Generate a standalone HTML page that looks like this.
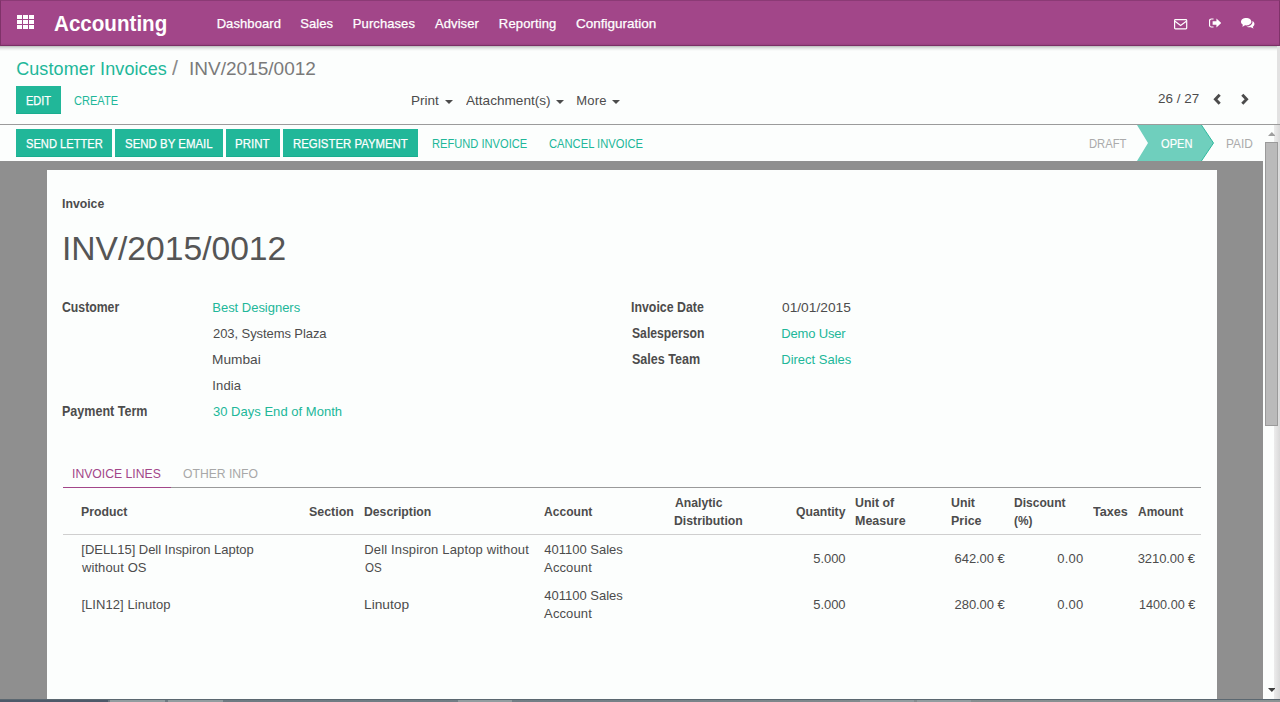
<!DOCTYPE html>
<html lang="en">
<head>
<meta charset="utf-8">
<title>INV/2015/0012 - Odoo</title>
<style>
html,body{margin:0;padding:0}
body{width:1280px;height:702px;position:relative;overflow:hidden;background:#fcfefd;font-family:"Liberation Sans",sans-serif;font-size:13px;color:#4c4c4c}
div,span,svg,i{position:absolute;box-sizing:border-box}
a,label,h1{position:absolute;margin:0;padding:0;font-weight:400;font-size:13px;text-decoration:none}
.t{white-space:nowrap;line-height:1;transform-origin:0 0}
.cw{color:#fff}.ct{color:#21b799}.cd{color:#4c4c4c}.cp{color:#a24689}
.b{font-weight:700}
#nav{left:0;top:0;width:1280px;height:46px;background:linear-gradient(#a24689 0,#a24689 42px,#97407f 44px,#7b2f66 44px);border:1px solid #7f3269;border-top-color:#8b3a75;border-bottom:1px solid #7b2f66}
#navshadow{left:0;top:46px;width:1280px;height:5px;background:linear-gradient(#c3c6c4 0,#c3c6c4 1px,#d8dad9 1px,#d8dad9 2px,#e6e8e7 2px,#e6e8e7 3px,#f0f2f1 3px,#f0f2f1 4px,#f8faf9 4px)}
#cpline{left:0;top:124px;width:1280px;height:1px;background:#9b9b9b}
#edge{left:1277px;top:46px;width:3px;height:78px;background:#e2e2e2}
.btn{background:#21b799;height:28px;border-bottom:1px solid #1aad8f}
#bg{left:0;top:161px;width:1263px;height:538px;background:#8f8f8f}
#sheet{left:47px;top:170px;width:1170px;height:529px;background:#fcfefd}
#sb{left:1263px;top:125px;width:17px;height:574px;background:#fcfefd}
#sbs{left:11px;top:0;width:6px;height:574px;background:linear-gradient(90deg,#ececec,#d9d9d9)}
#thumb{left:2px;top:17px;width:13px;height:284px;background:#bababa;border:1px solid #9a9a9a}
#task{left:0;top:699px;width:1280px;height:3px;background:linear-gradient(90deg,#6b7880 0,#737f86 45%,#868e90 75%,#8b9394 100%);border-top:1px solid #5b6770}
.tb{top:0;height:3px;background:#929da0}
.cr{fill:#4c4c4c}
</style>
</head>
<body>
<nav>
<div id="nav"></div>
<svg style="left:17px;top:15px" width="17" height="14" viewBox="0 0 17 14"><g fill="#fff"><rect x="0" y="0" width="5" height="4"/><rect x="6" y="0" width="5" height="4"/><rect x="12" y="0" width="5" height="4"/><rect x="0" y="5" width="5" height="4"/><rect x="6" y="5" width="5" height="4"/><rect x="12" y="5" width="5" height="4"/><rect x="0" y="10" width="5" height="4"/><rect x="6" y="10" width="5" height="4"/><rect x="12" y="10" width="5" height="4"/></g></svg>
<!-- envelope -->
<svg style="left:1174px;top:18.500px" width="14" height="11" viewBox="0 0 14 11"><rect x="0.6" y="0.6" width="12.100" height="9.200" rx="0.8" fill="none" stroke="#fff" stroke-width="1.2"/><path d="M1 2.200 L6.650 6.400 L12.300 2.200" fill="none" stroke="#fff" stroke-width="1.2"/></svg>
<!-- sign-out -->
<svg style="left:1208.750px;top:18.250px" width="12.700" height="9.980" viewBox="0 0 14 11"><path d="M5 1.100H2.600A2 2 0 0 0 .6 3.100V7.900A2 2 0 0 0 2.600 9.900H5" fill="none" stroke="#fff" stroke-width="1.300"/><path d="M4 3.500H8.200V.5L13.600 5.500 8.200 10.500V7.500H4Z" fill="#fff"/></svg>
<!-- comments -->
<svg style="left:1240.800px;top:18.100px" width="14.200" height="11.360" viewBox="0 0 15 12"><path d="M5.5 0C8.5 0 11 1.7 11 3.9S8.5 7.8 5.5 7.8c-.5 0-.9 0-1.300-.1C3.300 8.500 2.200 9 1 9.100c.5-.5.9-1.100 1.100-1.900C.8 6.500 0 5.300 0 3.900 0 1.700 2.500 0 5.500 0Z" fill="#fff"/><path d="M12 3.200c1.300.7 2.200 1.800 2.200 3.100 0 1.200-.7 2.200-1.800 2.900.2.700.6 1.300 1.100 1.800-1.100-.1-2.200-.6-3-1.300-.4.100-.9.100-1.300.100-1.300 0-2.500-.3-3.400-.9 3.500-.1 6.300-2.100 6.300-4.800 0-.3 0-.6-.1-.9Z" fill="#fff"/></svg>
<a class="t cw b" style="left:54.3px;top:13.8px;transform:scaleX(0.9581);font-size:21.5px">Accounting</a>
<a class="t cw" style="left:216.63px;top:17.1px;letter-spacing:0.1px;-webkit-text-stroke:0.25px currentColor">Dashboard</a>
<a class="t cw" style="left:300.16px;top:17.1px;letter-spacing:0.08px;-webkit-text-stroke:0.25px currentColor">Sales</a>
<a class="t cw" style="left:352.84px;top:17.1px;letter-spacing:0.08px;-webkit-text-stroke:0.25px currentColor">Purchases</a>
<a class="t cw" style="left:435.03px;top:17.1px;letter-spacing:0.08px;-webkit-text-stroke:0.25px currentColor">Adviser</a>
<a class="t cw" style="left:498.86px;top:17.1px;letter-spacing:0.14px;-webkit-text-stroke:0.25px currentColor">Reporting</a>
<a class="t cw" style="left:575.88px;top:17.1px;transform:scaleX(1.0376);-webkit-text-stroke:0.25px currentColor">Configuration</a>
</nav>
<div id="navshadow"></div>
<header>
<div id="cpline"></div>
<div id="edge"></div>
<div class="btn" style="left:16px;top:86px;width:45px"></div>
<svg class="cr" style="left:444.500px;top:100px" width="8" height="4" viewBox="0 0 8 4"><path d="M0 0H8L4 4Z"/></svg>
<svg class="cr" style="left:555.500px;top:100px" width="8" height="4" viewBox="0 0 8 4"><path d="M0 0H8L4 4Z"/></svg>
<svg class="cr" style="left:612.300px;top:100px" width="8" height="4" viewBox="0 0 8 4"><path d="M0 0H8L4 4Z"/></svg>
<svg style="left:1213px;top:93px" width="9" height="13" viewBox="0 0 9 13"><path d="M6.700 1.800 2.400 6.300 6.700 10.800" fill="none" stroke="#4c4c4c" stroke-width="2.900"/></svg>
<svg style="left:1240px;top:93px" width="9" height="13" viewBox="0 0 9 13"><path d="M2.300 1.800 6.600 6.300 2.300 10.800" fill="none" stroke="#4c4c4c" stroke-width="2.900"/></svg>
<a class="t ct" style="left:16.17px;top:59.76px;letter-spacing:0.1px;font-size:18px">Customer Invoices</a>
<span class="t" style="left:172.3px;top:59.29px;transform:scaleX(1.1000);font-size:19.5px;color:#8a8a8a">/</span>
<span class="t" style="left:188.82px;top:59.76px;transform:scaleX(1.0571);font-size:18px;color:#7a7a7a">INV/2015/0012</span>
<span class="t cw" style="left:26.03px;top:93.9px;transform:scaleX(0.8469);-webkit-text-stroke:0.25px currentColor">EDIT</span>
<a class="t ct" style="left:74.49px;top:93.9px;transform:scaleX(0.8500)">CREATE</a>
<span class="t cd" style="left:411.14px;top:93.75px;transform:scaleX(1.0399)">Print</span>
<span class="t cd" style="left:466.37px;top:93.75px;transform:scaleX(1.0455)">Attachment(s)</span>
<span class="t cd" style="left:576.19px;top:93.75px;letter-spacing:0.23px">More</span>
<span class="t cd" style="left:1158.19px;top:91.75px;transform:scaleX(1.0339)">26 / 27</span>
</header>
<section>
<div class="btn" style="left:16px;top:129px;width:96px"></div>
<div class="btn" style="left:115px;top:129px;width:108px"></div>
<div class="btn" style="left:226px;top:129px;width:54px"></div>
<div class="btn" style="left:283px;top:129px;width:135px"></div>
<svg style="left:1136px;top:125px" width="80" height="36" viewBox="0 0 80 36"><path d="M1 0H65.400L77.500 18 65.400 36H1L12 18Z" fill="#6fcfbd"/><path d="M65.400 0 77.500 18 65.400 36" fill="none" stroke="#2fba9f" stroke-width="1"/></svg>
<span class="t cw" style="left:26.28px;top:136.8px;transform:scaleX(0.8562);-webkit-text-stroke:0.25px currentColor">SEND LETTER</span>
<span class="t cw" style="left:125.32px;top:136.8px;transform:scaleX(0.8809);-webkit-text-stroke:0.25px currentColor">SEND BY EMAIL</span>
<span class="t cw" style="left:235.49px;top:136.8px;transform:scaleX(0.8849);-webkit-text-stroke:0.25px currentColor">PRINT</span>
<span class="t cw" style="left:293px;top:136.8px;transform:scaleX(0.8761);-webkit-text-stroke:0.25px currentColor">REGISTER PAYMENT</span>
<a class="t ct" style="left:431.52px;top:136.8px;transform:scaleX(0.8565)">REFUND INVOICE</a>
<a class="t ct" style="left:549.49px;top:136.8px;transform:scaleX(0.8606)">CANCEL INVOICE</a>
<span class="t" style="left:1089.01px;top:136.7px;transform:scaleX(0.8654);color:#ababab">DRAFT</span>
<span class="t cw" style="left:1161.09px;top:136.7px;transform:scaleX(0.8538);-webkit-text-stroke:0.2px currentColor">OPEN</span>
<span class="t" style="left:1225.96px;top:136.7px;transform:scaleX(0.9141);color:#ababab">PAID</span>
</section>
<main>
<div id="bg"></div>
<div id="sheet"></div>
<div style="left:63px;top:487px;width:1138px;height:1px;background:#9a9a9a"></div>
<div style="left:63px;top:487px;width:108px;height:1px;background:#a24689"></div>
<div style="left:63px;top:534px;width:1138px;height:1px;background:#cfcfcf"></div>
<span class="t cd b" style="left:62.38px;top:196.75px;transform:scaleX(0.9430)">Invoice</span>
<h1 class="t" style="left:62.04px;top:232.66px;transform:scaleX(1.0406);font-size:32.3px;color:#555555">INV/2015/0012</h1>
<label class="t cd b" style="left:62.01px;top:300.15px;transform:scaleX(0.8746);font-size:14px">Customer</label>
<a class="t ct" style="left:212.29px;top:301px;letter-spacing:-0.02px">Best Designers</a>
<span class="t cd" style="left:213.06px;top:327px;letter-spacing:-0.08px">203, Systems Plaza</span>
<span class="t cd" style="left:212.12px;top:353px;transform:scaleX(1.0526)">Mumbai</span>
<span class="t cd" style="left:212.37px;top:379px;letter-spacing:0.1px">India</span>
<label class="t cd b" style="left:62.38px;top:404.15px;transform:scaleX(0.8954);font-size:14px">Payment Term</label>
<a class="t ct" style="left:212.88px;top:405px;letter-spacing:0.03px">30 Days End of Month</a>
<label class="t cd b" style="left:631.38px;top:300.15px;transform:scaleX(0.8821);font-size:14px">Invoice Date</label>
<span class="t cd" style="left:781.56px;top:301px;transform:scaleX(1.0578)">01/01/2015</span>
<label class="t cd b" style="left:631.84px;top:326.15px;transform:scaleX(0.8691);font-size:14px">Salesperson</label>
<a class="t ct" style="left:781.31px;top:327px;letter-spacing:-0.17px">Demo User</a>
<label class="t cd b" style="left:631.81px;top:352.15px;transform:scaleX(0.8962);font-size:14px">Sales Team</label>
<a class="t ct" style="left:781.29px;top:353px;letter-spacing:-0.01px">Direct Sales</a>
<a class="t cp" style="left:72.13px;top:467px;transform:scaleX(0.9380)">INVOICE LINES</a>
<a class="t" style="left:183.23px;top:467px;transform:scaleX(0.9352);color:#a8a8a8">OTHER INFO</a>
<span class="t cd b" style="left:81.12px;top:504.75px;transform:scaleX(0.9433)">Product</span>
<span class="t cd b" style="left:309.38px;top:504.75px;transform:scaleX(0.9564)">Section</span>
<span class="t cd b" style="left:364.38px;top:504.75px;transform:scaleX(0.9399)">Description</span>
<span class="t cd b" style="left:543.59px;top:504.75px;transform:scaleX(0.9291)">Account</span>
<span class="t cd b" style="left:674.84px;top:496px;transform:scaleX(0.9389)">Analytic</span>
<span class="t cd b" style="left:674.38px;top:514px;transform:scaleX(0.9427)">Distribution</span>
<span class="t cd b" style="left:795.68px;top:504.8px;transform:scaleX(0.9382)">Quantity</span>
<span class="t cd b" style="left:854.88px;top:496px;transform:scaleX(0.9509)">Unit of</span>
<span class="t cd b" style="left:855.38px;top:514px;transform:scaleX(0.9590)">Measure</span>
<span class="t cd b" style="left:951.26px;top:496px;transform:scaleX(0.9465)">Unit</span>
<span class="t cd b" style="left:951.38px;top:514px;transform:scaleX(0.9589)">Price</span>
<span class="t cd b" style="left:1014.37px;top:496px;transform:scaleX(0.9270)">Discount</span>
<span class="t cd b" style="left:1014.43px;top:514px;transform:scaleX(0.9148)">(%)</span>
<span class="t cd b" style="left:1093.17px;top:505px;transform:scaleX(0.9696)">Taxes</span>
<span class="t cd b" style="left:1137.85px;top:505px;transform:scaleX(0.9192)">Amount</span>
<span class="t cd" style="left:81.37px;top:543.25px;letter-spacing:-0.04px">[DELL15] Dell Inspiron Laptop</span>
<span class="t cd" style="left:81.88px;top:561px;letter-spacing:0.12px">without OS</span>
<span class="t cd" style="left:364.29px;top:543.25px;letter-spacing:0.15px">Dell Inspiron Laptop without</span>
<span class="t cd" style="left:364.54px;top:561px;transform:scaleX(0.8904)">OS</span>
<span class="t cd" style="left:544.24px;top:543.25px">401100 Sales</span>
<span class="t cd" style="left:544.11px;top:561px;letter-spacing:0.11px">Account</span>
<span class="t cd" style="left:813.25px;top:552px;letter-spacing:-0.06px">5.000</span>
<span class="t cd" style="left:954.57px;top:552px;letter-spacing:-0.07px">642.00 €</span>
<span class="t cd" style="left:1057.27px;top:552px;letter-spacing:0.21px">0.00</span>
<span class="t cd" style="left:1137.73px;top:552px;letter-spacing:-0.08px">3210.00 €</span>
<span class="t cd" style="left:81.38px;top:598px;letter-spacing:0.07px">[LIN12] Linutop</span>
<span class="t cd" style="left:364.11px;top:598px;transform:scaleX(1.0566)">Linutop</span>
<span class="t cd" style="left:544.24px;top:589px">401100 Sales</span>
<span class="t cd" style="left:544.11px;top:607px;letter-spacing:0.11px">Account</span>
<span class="t cd" style="left:813.25px;top:598px;letter-spacing:-0.06px">5.000</span>
<span class="t cd" style="left:954.58px;top:598px;letter-spacing:-0.07px">280.00 €</span>
<span class="t cd" style="left:1057.27px;top:598px;letter-spacing:0.21px">0.00</span>
<span class="t cd" style="left:1139.16px;top:598px;transform:scaleX(0.9725)">1400.00 €</span>
</main>
<div id="sb"><div id="sbs"></div><div id="thumb"></div>
<svg style="left:4.600px;top:7.200px" width="7.600" height="4" viewBox="0 0 7.600 4"><path d="M0 4 3.800 0 7.600 4Z" fill="#9f9f9f"/></svg>
<svg style="left:4.800px;top:563px" width="7.600" height="4" viewBox="0 0 7.600 4"><path d="M0 0H7.600L3.800 4Z" fill="#404040"/></svg>
</div>
<div id="task"><div class="tb" style="left:110px;width:55px"></div><div class="tb" style="left:168px;width:55px"></div><div class="tb" style="left:458px;width:54px"></div><div class="tb" style="left:860px;width:54px"></div><div class="tb" style="left:917px;width:54px"></div><div style="left:0;top:0;width:108px;height:3px;background:#4d5969"></div></div>

</body>
</html>
